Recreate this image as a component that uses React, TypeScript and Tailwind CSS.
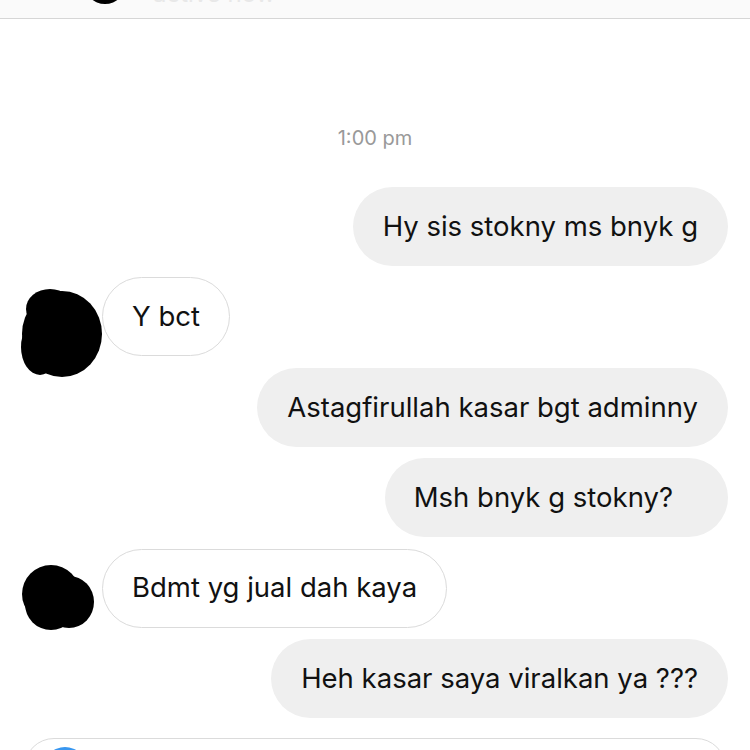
import React from "react";

const font = { fontFamily: "Inter, 'Noto Sans', 'Liberation Sans', sans-serif" };

function Out({ text, wide }: { text: string; wide?: boolean }) {
  return (
    <div
      className={
        wide
          ? "self-end mr-[22px] h-[79px] flex items-center rounded-full bg-[#efefef] pl-[29px] pr-[55px] text-[27.5px] text-[#111] whitespace-nowrap"
          : "self-end mr-[22px] h-[79px] flex items-center rounded-full bg-[#efefef] px-[30px] text-[27.5px] text-[#111] whitespace-nowrap"
      }
    >
      {text}
    </div>
  );
}

function Avatar1() {
  return (
    <svg width="82" height="91" viewBox="0 0 82 91" className="block">
      <ellipse cx="42" cy="47" rx="40" ry="43" fill="#000" />
      <ellipse cx="30" cy="22" rx="24" ry="20" fill="#000" />
      <ellipse cx="20" cy="60" rx="19" ry="28" fill="#000" />
    </svg>
  );
}

function Avatar2() {
  return (
    <svg width="74" height="67" viewBox="0 0 74 67" className="block">
      <ellipse cx="30" cy="30" rx="29" ry="29" fill="#000" />
      <ellipse cx="48" cy="38" rx="25" ry="26" fill="#000" />
      <ellipse cx="30" cy="40" rx="26" ry="26" fill="#000" />
    </svg>
  );
}

function In({ text, avatar }: { text: string; avatar: 1 | 2 }) {
  return (
    <div className="flex items-start">
      {avatar === 1 ? (
        <div className="ml-[20px] w-[82px] h-[91px] mt-[10px] mb-[-22px] shrink-0">
          <Avatar1 />
        </div>
      ) : (
        <div className="ml-[21px] w-[81px] h-[67px] mt-[15px] mb-[-3px] shrink-0">
          <Avatar2 />
        </div>
      )}
      <div className="h-[79px] flex items-center rounded-full bg-white border border-[#dbdbdb] px-[29px] text-[27.5px] text-[#111] whitespace-nowrap">
        {text}
      </div>
    </div>
  );
}

export default function App() {
  return (
    <div className="w-[750px] h-[750px] overflow-hidden bg-white flex flex-col" style={font}>
      <div className="h-[19px] shrink-0 bg-[#fafafa] border-b border-[#d6d6d6] flex items-end overflow-hidden">
        <div className="ml-[84px] w-[42px] h-[42px] rounded-full bg-black mb-[14px] shrink-0" />
        <div className="ml-[27px] text-[24px] leading-[24px] text-[#e8e8e8] mb-[12px]">active now</div>
      </div>
      <div className="mt-[107px] text-center text-[20px] leading-[24px] text-[#999]">1:00 pm</div>
      <div className="mt-[37px] flex flex-col gap-[11.4px]">
        <Out text="Hy sis stokny ms bnyk g" />
        <In text="Y bct" avatar={1} />
        <Out text="Astagfirullah kasar bgt adminny" />
        <Out text="Msh bnyk g stokny?" wide />
        <In text="Bdmt yg jual dah kaya" avatar={2} />
        <Out text="Heh kasar saya viralkan ya ???" />
      </div>
      <div className="mt-[20px] mx-[24px] h-[60px] shrink-0 rounded-full border border-[#dbdbdb] flex items-start">
        <div className="ml-[18px] mt-[8px] w-[44px] h-[44px] rounded-full bg-[#3897f0]" />
      </div>
    </div>
  );
}
